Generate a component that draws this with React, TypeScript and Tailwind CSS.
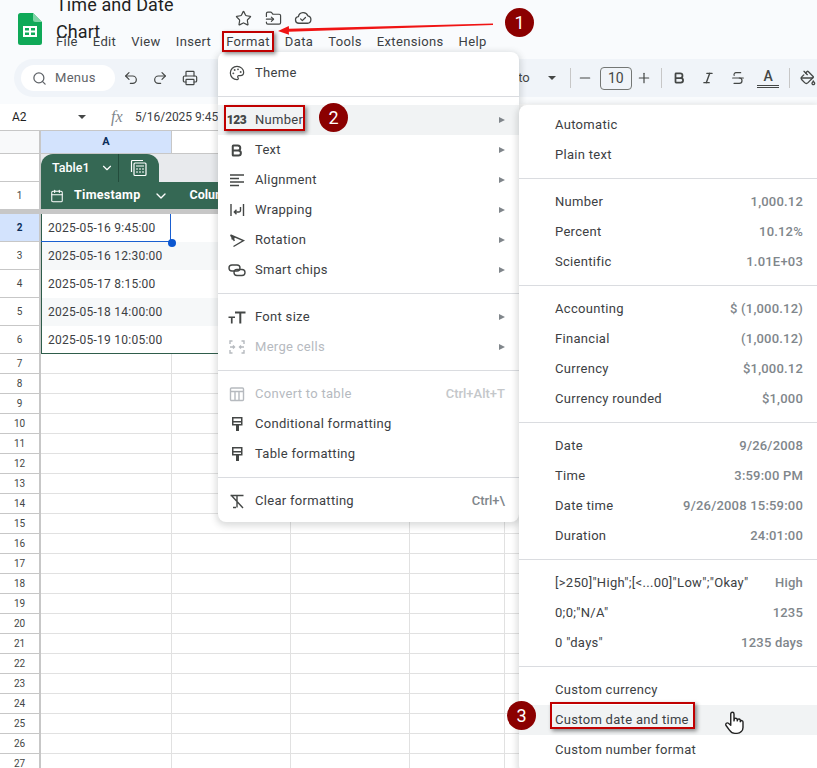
import type { ReactNode } from "react";
import {
  Bold,
  Calendar,
  ChevronDown,
  FolderInput,
  Italic,
  Minus,
  PaintBucket,
  Palette,
  Plus,
  Printer,
  Redo2,
  Search,
  Star,
  Strikethrough,
  Undo2,
} from "lucide-react";

const TOP_MENUS = ["File", "Edit", "View", "Insert", "Format", "Data", "Tools", "Extensions", "Help"];
const TABLE_ROWS = [
  { n: 2, value: "2025-05-16 9:45:00" },
  { n: 3, value: "2025-05-16 12:30:00" },
  { n: 4, value: "2025-05-17 8:15:00" },
  { n: 5, value: "2025-05-18 14:00:00" },
  { n: 6, value: "2025-05-19 10:05:00" },
];
const EMPTY_ROWS = Array.from({ length: 21 }, (_, i) => i + 7);

function SheetsLogo() {
  return (
    <svg viewBox="0 0 24 32" className="h-8 w-6 shrink-0">
      <path d="M2.5 0H15l9 9v20.5a2.5 2.5 0 0 1-2.5 2.5h-19A2.5 2.5 0 0 1 0 29.500V2.500A2.500 2.500 0 0 1 2.500 0z" fill="#0fa958" />
      <path d="M15 0l9 9h-6.500A2.500 2.500 0 0 1 15 6.500z" fill="#7fd4a6" />
      <path d="M5 13h14v11H5zm2 2v2.500h4V15zm6 0v2.500h4V15zm-6 4.500V22h4v-2.500zm6 0V22h4v-2.500z" fill="#fff" fillRule="evenodd" />
    </svg>
  );
}

function CloudDone() {
  return (
    <svg viewBox="0 0 24 24" className="h-[18px] w-[18px]" fill="none" stroke="#444746" strokeWidth="1.700" strokeLinejoin="round" strokeLinecap="round">
      <path d="M6.500 19a4.500 4.500 0 0 1-.6-8.960A6.500 6.500 0 0 1 18.400 9.100 5 5 0 0 1 18 19z" />
      <path d="M8.800 13.200l2.300 2.300 4.200-4.200" />
    </svg>
  );
}

function MenuSvg({ children }: { children: ReactNode }) {
  return (
    <svg viewBox="0 0 18 18" className="h-[18px] w-[18px]" fill="none" stroke="currentColor" strokeWidth="1.400">
      {children}
    </svg>
  );
}

const ICONS: Record<string, ReactNode> = {
  theme: <Palette className="h-4 w-4" strokeWidth={1.800} />,
  number: <span className="text-[12px] font-black leading-none tracking-[-0.5px]">123</span>,
  text: <Bold className="h-[15px] w-[15px]" strokeWidth={3.200} />,
  align: (
    <MenuSvg>
      <path d="M2 4h14M2 7.500h9M2 11h14M2 14.500h9" />
    </MenuSvg>
  ),
  wrap: (
    <MenuSvg>
      <path d="M3 3v12M15.500 3v12M12.500 6v3.500a1.500 1.500 0 0 1-1.500 1.500H6.500M8.500 8.800L6.300 11l2.200 2.200" />
    </MenuSvg>
  ),
  rotate: (
    <MenuSvg>
      <path d="M2.500 4l13 5.500-10 6M4.500 4.800l1.800 5.200M2.500 4l3 5M3.500 8l3-1.500" />
    </MenuSvg>
  ),
  chips: (
    <MenuSvg>
      <rect x="1" y="4" width="11" height="6" rx="3" />
      <rect x="6" y="8.500" width="11" height="6" rx="3" />
    </MenuSvg>
  ),
  fontSize: (
    <svg viewBox="0 0 18 18" className="h-[18px] w-[18px]" fill="currentColor">
      <path d="M7 3.500h10.500v2h-4.200v10h-2v-10H7zM.5 8.500h6.500v1.600H4.600v5.400H2.900v-5.400H.5z" />
    </svg>
  ),
  merge: (
    <MenuSvg>
      <path d="M2 6V3h2.500M13.500 3H16v3M2 12v3h2.500M13.500 15H16v-3M2 9h4M16 9h-4M5 7.500L6.500 9 5 10.500M13 7.500L11.500 9l1.500 1.500" />
    </MenuSvg>
  ),
  convert: (
    <MenuSvg>
      <rect x="2.500" y="3" width="13" height="12.500" rx="1" />
      <path d="M2.500 6.500h13M7 6.500v9M11 6.500v9" />
    </MenuSvg>
  ),
  roller: (
    <svg viewBox="0 0 18 18" className="h-[18px] w-[18px]" fill="currentColor">
      <path d="M4 2h10.500v8.500h-3.500V16H8v-5.500H4zm1.500 1.500v2.500h7.500V3.500zM5.500 7.500v1.500h7.500V7.500z" fillRule="evenodd" />
    </svg>
  ),
  clear: (
    <MenuSvg>
      <path d="M2.500 3.500h13M9 3.500v12M5 15.500h3M3 3l12 13" />
    </MenuSvg>
  ),
};

function Arrow() {
  return <span className="h-0 w-0 border-y-[3.500px] border-l-[6px] border-y-transparent border-l-[#80868b]" />;
}

interface MainItemProps {
  icon: string;
  label: string;
  shortcut?: string;
  submenu?: boolean;
  disabled?: boolean;
  active?: boolean;
}

function MainItem({ icon, label, shortcut, submenu, disabled, active }: MainItemProps) {
  return (
    <div className={`flex h-[30px] items-center pr-[14px] ${active ? "bg-[#f1f3f4]" : ""} ${disabled ? "text-[#b6babf]" : "text-[#3c4043]"}`}>
      <span className={`flex w-[37px] shrink-0 justify-center ${disabled ? "" : "text-[#444746]"}`}>{ICONS[icon]}</span>
      <span className="flex-1 tracking-[0.3px]">{label}</span>
      {shortcut ? <span className={`font-medium ${disabled ? "text-[#c4c7ca]" : "text-[#80868b]"}`}>{shortcut}</span> : null}
      {submenu ? <Arrow /> : null}
    </div>
  );
}

function SubItem({ label, value, active }: { label: string; value?: string; active?: boolean }) {
  return (
    <div className={`flex h-[30px] items-center pl-[36px] pr-[14px] ${active ? "bg-[#f1f3f4]" : ""}`}>
      <span className="flex-1 tracking-[0.3px] text-[#3c4043]">{label}</span>
      {value ? <span className="font-medium tracking-[0.2px] text-[#80868b]">{value}</span> : null}
    </div>
  );
}

function Sep({ className = "my-[8px]" }: { className?: string }) {
  return <div className={`h-px bg-[#dadce0] ${className}`} />;
}

function Badge({ n, className }: { n: number; className: string }) {
  return (
    <div className={`absolute flex h-[29px] w-[29px] items-center justify-center rounded-full bg-[#8b0000] text-[18px] text-white ${className}`}>
      {n}
    </div>
  );
}

function RedBox({ className }: { className: string }) {
  return <div className={`absolute border-[2px] border-[#c00000] shadow-[2px_2px_4px_rgba(0,0,0,0.45)] ${className}`} />;
}

function Cells() {
  return (
    <>
      <div className="w-[131px] shrink-0 border-b border-r border-[#e1e1e1]" />
      <div className="w-[119px] shrink-0 border-b border-r border-[#e1e1e1]" />
      <div className="w-[119px] shrink-0 border-b border-r border-[#e1e1e1]" />
      <div className="w-[95px] shrink-0 border-b border-r border-[#e1e1e1]" />
      <div className="flex-1 border-b border-[#e1e1e1]" />
    </>
  );
}

export default function App() {
  return (
    <div className="relative h-[768px] w-[817px] overflow-hidden bg-white font-['Roboto',sans-serif] text-[13px]">
      <header className="h-[104px] bg-[#f9fbfd]">
        <div className="flex h-[59px] pl-[18px] pt-[13px]">
          <SheetsLogo />
          <div className="ml-[14px] -mt-[7px]">
            <div className="flex h-6 items-center">
              <span className="w-[156px] text-[18px] tracking-[0.1px] text-[#1f1f1f]">Time and Date Chart</span>
              <span className="ml-[16px] flex w-[30px] justify-center text-[#444746]">
                <Star className="h-[17px] w-[17px]" strokeWidth={1.700} />
              </span>
              <span className="flex w-[30px] justify-center text-[#444746]">
                <FolderInput className="h-[17px] w-[17px]" strokeWidth={1.700} />
              </span>
              <span className="flex w-[30px] justify-center">
                <CloudDone />
              </span>
            </div>
            <div className="mt-px flex h-[22px] items-center gap-[15px] text-[#3c4043]">
              {TOP_MENUS.map((m) => (
                <span key={m} className="tracking-[0.35px]">
                  {m}
                </span>
              ))}
            </div>
          </div>
        </div>
        <div className="ml-[14px] flex h-[38px] items-center rounded-l-[19px] bg-[#f0f4f9] pl-[7px] text-[#444746]">
          <div className="flex h-[26px] w-[94px] items-center rounded-full bg-white pl-[11px] text-[#5f6368]">
            <Search className="h-[15px] w-[15px]" strokeWidth={2} />
            <span className="ml-[8px] tracking-[0.3px]">Menus</span>
          </div>
          <span className="ml-px flex w-[30px] justify-center">
            <Undo2 className="h-4 w-4" strokeWidth={1.800} />
          </span>
          <span className="flex w-[30px] justify-center">
            <Redo2 className="h-4 w-4" strokeWidth={1.800} />
          </span>
          <span className="flex w-[30px] justify-center">
            <Printer className="h-4 w-4" strokeWidth={1.800} />
          </span>
          <span className="ml-[313px] w-[26px]">to</span>
          <span className="flex w-[15px] justify-center">
            <span className="h-0 w-0 border-x-[4px] border-t-[4px] border-x-transparent border-t-[#444746]" />
          </span>
          <span className="ml-[11px] h-5 w-px bg-[#c7c7c7]" />
          <span className="flex w-[29px] justify-center">
            <Minus className="h-4 w-4" strokeWidth={1.800} />
          </span>
          <span className="flex h-[23px] w-[32px] items-center justify-center rounded-[4px] border border-[#747775] text-[14px]">10</span>
          <span className="flex w-[24px] justify-center">
            <Plus className="h-4 w-4" strokeWidth={1.800} />
          </span>
          <span className="ml-[5px] h-5 w-px bg-[#c7c7c7]" />
          <span className="ml-[2px] flex w-[30px] justify-center">
            <Bold className="h-[14px] w-[14px]" strokeWidth={3} />
          </span>
          <span className="flex w-[30px] justify-center">
            <Italic className="h-[14px] w-[14px]" strokeWidth={2.400} />
          </span>
          <span className="flex w-[30px] justify-center">
            <Strikethrough className="h-4 w-4" strokeWidth={1.800} />
          </span>
          <span className="flex w-[30px] flex-col items-center text-[14px] font-medium leading-[14px]">
            A<span className="mt-[2px] h-[3px] w-[22px] border-y border-[#444746]" />
          </span>
          <span className="ml-[6px] h-5 w-px bg-[#c7c7c7]" />
          <span className="ml-[9px] flex w-[18px] justify-center">
            <PaintBucket className="h-4 w-4" strokeWidth={2} />
          </span>
        </div>
      </header>

      <div className="flex h-[26px] items-center bg-white text-[12px] text-[#3c4043]">
        <span className="ml-[12px] w-[66px] text-[#1f1f1f]">A2</span>
        <span className="h-0 w-0 border-x-[4px] border-t-[4px] border-x-transparent border-t-[#444746]" />
        <span className="ml-[25px] w-[24px] font-['Liberation_Serif',serif] text-[16px] italic text-[#80868b]">fx</span>
        <span>5/16/2025 9:45:00</span>
      </div>

      <div className="relative">
        <div className="flex h-[24px] border-y border-[#c7c7c7]">
          <div className="w-[41px] shrink-0 border-r-[2px] border-[#c7c7c7] bg-[#f8f9fa]" />
          <div className="flex w-[131px] shrink-0 items-center justify-center border-r border-[#c7c7c7] bg-[#d3e3fd] text-[11px] font-bold text-[#0b2f5b]">
            A
          </div>
          <div className="flex-1 bg-white" />
        </div>

        <div className="flex h-[28px]">
          <div className="w-[41px] shrink-0 border-b border-r-[2px] border-[#c7c7c7] bg-white" />
          <div className="flex flex-1 bg-[#e8eaed]">
            <div className="flex h-[28px] w-[118px] rounded-t-[12px] bg-[#356854] text-white">
              <div className="flex w-[78px] items-center border-r border-[#234c3c] pl-[11px] text-[12.500px] font-medium">
                Table1
                <ChevronDown className="ml-[10px] h-[14px] w-[14px]" strokeWidth={2} />
              </div>
              <div className="flex flex-1 items-center justify-center">
                <svg viewBox="0 0 18 18" className="h-[18px] w-[18px]" fill="none" stroke="#fff" strokeWidth="1.200">
                  <rect x="4" y="4" width="12" height="12.500" rx="1" />
                  <path d="M1.500 13V2.500a1 1 0 0 1 1-1H13M6 7h8M6 10h2M9 10h2M12 10h2M6 13h2M9 13h2M12 13h2" />
                </svg>
              </div>
            </div>
          </div>
        </div>

        <div className="flex h-[27px]">
          <div className="flex w-[41px] shrink-0 items-center justify-center border-r-[2px] border-[#c7c7c7] bg-white text-[10px] text-[#444746]">1</div>
          <div className="flex flex-1 items-center bg-[#356854] text-[12.500px] font-bold text-white">
            <Calendar className="ml-[9px] h-[14px] w-[14px]" strokeWidth={1.800} />
            <span className="ml-[10px] tracking-[0.3px]">Timestamp</span>
            <ChevronDown className="ml-[12px] h-[16px] w-[16px]" strokeWidth={2} />
            <span className="ml-[21px]">Column2</span>
          </div>
        </div>

        <div className="h-[5px] bg-[#c7c7c7]" />

        {TABLE_ROWS.map((r) => (
          <div key={r.n} className="flex h-[28px]">
            <div
              className={`flex w-[41px] shrink-0 items-center justify-center border-b border-r-[2px] border-[#c7c7c7] text-[10px] ${
                r.n === 2 ? "bg-[#d3e3fd] font-bold text-[#0b2f5b]" : "bg-white text-[#444746]"
              }`}
            >
              {r.n}
            </div>
            <div className={`flex flex-1 items-center border-l border-[#2f5d4b] pl-[6px] text-[12px] tracking-[0.25px] text-[#3c4043] ${r.n % 2 === 1 ? "bg-[#f6f8f9]" : "bg-white"} ${r.n === 6 ? "border-b" : ""}`}>
              {r.value}
            </div>
          </div>
        ))}

        {EMPTY_ROWS.map((n) => (
          <div key={n} className="flex h-5">
            <div className="flex w-[41px] shrink-0 items-center justify-center border-b border-r-[2px] border-[#c7c7c7] text-[10px] text-[#444746]">{n}</div>
            <Cells />
          </div>
        ))}

        {/* selection around A2 */}
        <div className="absolute left-[41px] top-[84px] h-[28px] w-[130px] border-b-[1.500px] border-r-[1.500px] border-[#1a5fd0]" />
        <div className="absolute left-[168px] top-[109px] h-[8px] w-[8px] rounded-full bg-[#0b57d0]" />
      </div>

      <div className="absolute left-[218px] top-[52px] w-[301px] rounded-[8px] bg-white py-[6px] shadow-[0_2px_6px_2px_rgba(60,64,67,0.18)]">
        <MainItem icon="theme" label="Theme" />
        <Sep />
        <MainItem icon="number" label="Number" submenu active />
        <MainItem icon="text" label="Text" submenu />
        <MainItem icon="align" label="Alignment" submenu />
        <MainItem icon="wrap" label="Wrapping" submenu />
        <MainItem icon="rotate" label="Rotation" submenu />
        <MainItem icon="chips" label="Smart chips" submenu />
        <Sep />
        <MainItem icon="fontSize" label="Font size" submenu />
        <MainItem icon="merge" label="Merge cells" submenu disabled />
        <Sep />
        <MainItem icon="convert" label="Convert to table" shortcut="Ctrl+Alt+T" disabled />
        <MainItem icon="roller" label="Conditional formatting" />
        <MainItem icon="roller" label="Table formatting" />
        <Sep />
        <MainItem icon="clear" label="Clear formatting" shortcut="Ctrl+\" />
      </div>

      <div className="absolute left-[519px] top-[105px] w-[298px] rounded-l-[8px] bg-white pb-[8px] pt-[5px] shadow-[0_2px_6px_2px_rgba(60,64,67,0.18)]">
        <SubItem label="Automatic" />
        <SubItem label="Plain text" />
        <Sep />
        <SubItem label="Number" value="1,000.12" />
        <SubItem label="Percent" value="10.12%" />
        <SubItem label="Scientific" value="1.01E+03" />
        <Sep />
        <SubItem label="Accounting" value="$ (1,000.12)" />
        <SubItem label="Financial" value="(1,000.12)" />
        <SubItem label="Currency" value="$1,000.12" />
        <SubItem label="Currency rounded" value="$1,000" />
        <Sep />
        <SubItem label="Date" value="9/26/2008" />
        <SubItem label="Time" value="3:59:00 PM" />
        <SubItem label="Date time" value="9/26/2008 15:59:00" />
        <SubItem label="Duration" value="24:01:00" />
        <Sep />
        <SubItem label={'[>250]"High";[<...00]"Low";"Okay"'} value="High" />
        <SubItem label={'0;0;"N/A"'} value="1235" />
        <SubItem label={'0 "days"'} value="1235 days" />
        <Sep />
        <SubItem label="Custom currency" />
        <SubItem label="Custom date and time" active />
        <SubItem label="Custom number format" />
      </div>

      <RedBox className="left-[222px] top-[31px] h-[21px] w-[52px]" />
      <RedBox className="left-[224px] top-[105px] h-[26px] w-[81px]" />
      <RedBox className="left-[550px] top-[702px] h-[27px] w-[145px]" />
      <Badge n={1} className="left-[505px] top-[8px]" />
      <Badge n={2} className="left-[319px] top-[103px]" />
      <Badge n={3} className="left-[507px] top-[701px]" />

      <svg viewBox="0 0 817 60" className="absolute left-0 top-0 h-[60px] w-[817px]">
        <path d="M493 23.500L289 28.800l-.2-2.800L278 31l11 3.800-.2-3L493 25z" fill="#f01414" />
      </svg>

      <svg viewBox="0 0 24 24" className="absolute left-[721px] top-[709px] h-[26px] w-[26px]" fill="#fff" stroke="#222" strokeWidth="1.300" strokeLinejoin="round">
        <path d="M9 12V4.500a1.500 1.500 0 0 1 3 0V11l.2-1.200a1.400 1.400 0 0 1 2.800.2v1l.2-.6a1.300 1.300 0 0 1 2.600.3v1l.2-.3a1.200 1.200 0 0 1 2.300.5V17c0 3-2.300 5.500-5.500 5.500h-2c-2.500 0-3.800-1.200-5-3L4.500 15a1.500 1.500 0 0 1 2.300-1.800L9 15z" />
      </svg>
    </div>
  );
}
